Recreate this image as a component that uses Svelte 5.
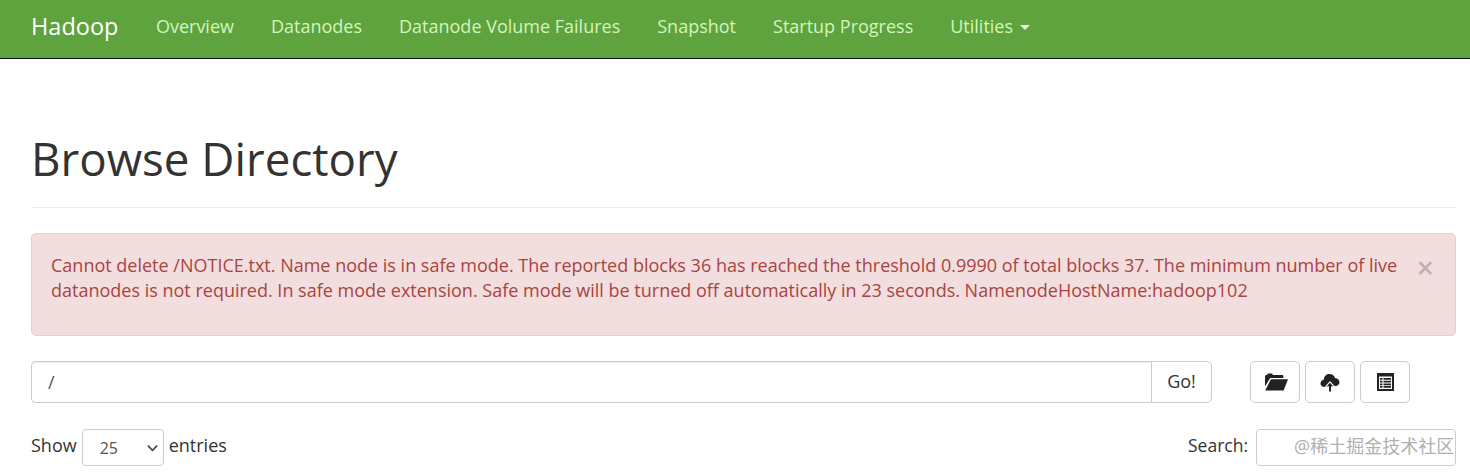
<script lang="ts">
	const navItems = ['Overview', 'Datanodes', 'Datanode Volume Failures', 'Snapshot', 'Startup Progress'];
	const message = 'Cannot delete /NOTICE.txt. Name node is in safe mode. The reported blocks 36 has reached the threshold 0.9990 of total blocks 37. The minimum number of live datanodes is not required. In safe mode extension. Safe mode will be turned off automatically in 23 seconds. NamenodeHostName:hadoop102';
</script>

<div class="page">
	<nav class="navbar">
		<a class="brand" href="#top">Hadoop</a>
		<ul class="nav">
			{#each navItems as item}
				<li><a href="#top">{item}</a></li>
			{/each}
			<li><a href="#top">Utilities <b class="caret"></b></a></li>
		</ul>
	</nav>

	<main class="container">
		<div class="page-header">
			<h1>Browse Directory</h1>
		</div>

		<div class="alert">
			<p>{message}</p>
			<button class="close" aria-label="Close">×</button>
		</div>

		<div class="path-row">
			<div class="input-group">
				<input class="path" value="/" />
				<button class="go">Go!</button>
			</div>
			<div class="actions">
				<button class="icon-btn folder" aria-label="Create directory">
					<svg viewBox="0 0 24 18" width="24" height="18">
						<path d="M1 13.500V3.500C1 2.600 1.600 2 2.500 2H3L4 .5h4L9 2h9c.8 0 1.300.5 1.300 1.200V5H6.200z" fill="#222" />
						<path d="M6.900 6.200H24L19.600 17.500H1.200z" fill="#222" />
					</svg>
				</button>
				<button class="icon-btn" aria-label="Upload files">
					<svg viewBox="0 0 20 19" width="20" height="19">
						<path d="M4.500 14C2.200 14 .5 12.400.5 10.400c0-1.900 1.400-3.300 3.100-3.500C4.200 3 6.600 1 9.500 1c2.600 0 4.800 1.600 5.500 3.900 2.500.1 4.500 2 4.500 4.400 0 2-1.600 3.700-3.800 3.700z" fill="#222" />
						<path d="M10 8l5.200 5.800h-3.400V19H8.200v-5.200H4.800z" fill="#fff" />
						<path d="M10 9.800l3.200 3.500h-2.200V18.500H9v-5.200H6.800z" fill="#222" />
					</svg>
				</button>
				<button class="icon-btn" aria-label="Cut and paste">
					<svg viewBox="0 0 17 18" width="17" height="18">
						<path fill-rule="evenodd" d="M0 0h17v18H0zM2 3.500V16h13V3.500zM3 5h2.500v1.800H3zM6.500 5H14v1.800H6.500zM3 7.800h2.500v1.800H3zM6.500 7.800H14v1.800H6.500zM3 10.500h2.500v1.800H3zM6.500 10.500H14v1.800H6.500zM3 13h2.500v1.800H3zM6.500 13H14v1.800H6.500z" fill="#222" />
					</svg>
				</button>
			</div>
		</div>

		<div class="table-controls">
			<label class="length">
				Show
				<span class="select"><span class="select-value">25</span>
					<svg viewBox="0 0 12 8" width="11" height="8"><path d="M1 1.500l5 5 5-5" fill="none" stroke="#444" stroke-width="1.800" /></svg>
				</span>
				entries
			</label>
			<label class="search">
				Search:
				<span class="search-box"></span>
			</label>
		</div>
	</main>

	<span class="watermark">@稀土掘金技术社区</span>
</div>

<style>
	:global(body) {
		margin: 0;
		background: #fff;
	}

	.page {
		position: relative;
		height: 473px;
		overflow: hidden;
		font-family: "Open Sans", "Noto Sans", sans-serif;
		font-size: 18px;
		line-height: 25px;
		color: #333;
	}

	/* navbar */
	.navbar {
		display: flex;
		align-items: center;
		box-sizing: content-box;
		height: 52px;
		padding: 0 0 6px 31px;
		background: #5fa33e;
		border-bottom: 1px solid #0b0f08;
	}

	.brand {
		color: #fff;
		font-size: 23.5px;
		text-decoration: none;
		margin-right: 19px;
	}

	.nav {
		display: flex;
		list-style: none;
		margin: 0;
		padding: 0;
	}

	.nav a {
		display: block;
		padding: 0 18.5px;
		color: #d3f5bd;
		text-decoration: none;
	}

	.caret {
		display: inline-block;
		width: 0;
		height: 0;
		margin-left: 2px;
		vertical-align: middle;
		border-top: 5px solid #e6f5dc;
		border-left: 5px solid transparent;
		border-right: 5px solid transparent;
	}

	/* content */
	.container {
		padding: 0 14px 0 31px;
	}

	.page-header {
		height: 148px;
		border-bottom: 1px solid #eee;
		display: flex;
		align-items: flex-end;
	}

	h1 {
		margin: 0 0 23px;
		font-size: 45.7px;
		font-weight: 400;
		line-height: 52px;
		color: #333;
	}

	.alert {
		display: flex;
		justify-content: space-between;
		align-items: flex-start;
		box-sizing: border-box;
		height: 103px;
		margin-top: 25px;
		padding: 19px 21px 0 19px;
		background: #f2dede;
		border: 1px solid #ebccd1;
		border-radius: 5px;
		color: #a94442;
	}

	.alert p {
		margin: 0;
		max-width: 1360px;
	}

	.close {
		padding: 0;
		border: 0;
		background: none;
		margin-top: 1px;
		font: 600 30px/28px "Open Sans", sans-serif;
		color: #c7adad;
	}

	.path-row {
		display: flex;
		margin-top: 25px;
	}

	.input-group {
		display: flex;
		width: 1181px;
	}

	input.path {
		flex: 1;
		min-width: 0;
		box-sizing: border-box;
		height: 42px;
		padding: 0 16px 1px;
		border: 1px solid #ccc;
		border-right: 0;
		border-radius: 5px 0 0 5px;
		font: inherit;
		color: #555;
		box-shadow: inset 0 1px 1px rgba(0, 0, 0, .075);
	}

	.go {
		width: 61px;
		height: 42px;
		padding: 0 0 1px;
		border: 1px solid #ccc;
		border-radius: 0 5px 5px 0;
		background: #fff;
		font: inherit;
		color: #333;
	}

	.actions {
		display: flex;
		gap: 5px;
		margin-left: 38px;
	}

	.icon-btn {
		display: flex;
		align-items: center;
		justify-content: center;
		width: 50px;
		height: 42px;
		padding: 0;
		border: 1px solid #ccc;
		border-radius: 5px;
		background: #fff;
	}

	.folder {
		padding-left: 2px;
	}

	.table-controls {
		display: flex;
		justify-content: space-between;
		margin-top: 26px;
	}

	.length, .search {
		display: flex;
		align-items: flex-start;
		gap: 5px;
		line-height: 33px;
	}

	.search {
		font-size: 17.5px;
	}

	.select {
		display: flex;
		align-items: center;
		justify-content: space-between;
		box-sizing: border-box;
		width: 82px;
		height: 37px;
		padding: 0 5px 0 17px;
		border: 1px solid #ccc;
		border-radius: 4px;
		font-size: 16px;
		color: #555;
	}

	.select-value {
		padding-top: 1px;
	}

	.search-box {
		display: block;
		box-sizing: border-box;
		width: 200px;
		height: 37px;
		margin-left: 3px;
		border: 1px solid #ccc;
		border-radius: 4px;
	}

	.watermark {
		position: absolute;
		left: 1294px;
		top: 434px;
		font-family: "Open Sans", "Noto Sans CJK SC", sans-serif;
		font-size: 18px;
		color: #b0b0b0;
		white-space: nowrap;
	}
</style>
